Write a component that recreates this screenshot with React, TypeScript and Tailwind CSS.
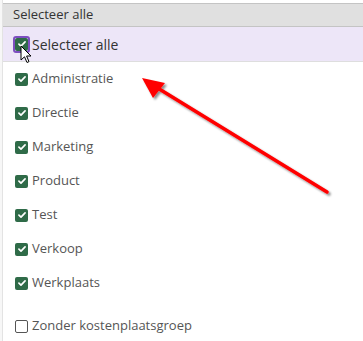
const items = ['Administratie', 'Directie', 'Marketing', 'Product', 'Test', 'Verkoop', 'Werkplaats'];

function CheckBox({ checked = true }: { checked?: boolean }) {
  if (!checked) {
    return <span className="block h-[13px] w-[13px] rounded-[2px] border border-[#555] bg-white" />;
  }
  return (
    <span className="flex h-[13px] w-[13px] items-center justify-center rounded-[2px] bg-[#2f6b48]">
      <svg viewBox="0 0 12 12" className="h-[10px] w-[10px]">
        <path d="M2.3 6.2 L4.8 8.6 L9.7 3.4" fill="none" stroke="white" strokeWidth="2" strokeLinecap="round" strokeLinejoin="round" />
      </svg>
    </span>
  );
}

export default function App() {
  return (
    <div className="relative h-[341px] w-[363px] overflow-hidden bg-white font-['Open_Sans',sans-serif] text-[13px] text-[#555]">
      <div className="flex h-full">
        {/* left gutter */}
        <div className="w-[3px] shrink-0 border-r border-[#e3e3e3] bg-[#f7f7f7]" />
        <div className="flex-1">
          <div className="mt-[3px] flex h-[24px] items-center border-y border-[#c4c4c4] bg-[#e0e0e0] pl-[10px] text-[#333]">
            Selecteer alle
          </div>
          <div className="relative flex h-[35px] items-center gap-[4px] border-b border-[#dedede] bg-[#ede6f8] pl-[12px] text-[#333]">
            <span className="rounded-[1px] outline-2 outline-[#7d4fc0]">
              <CheckBox />
            </span>
            <span className="text-[14px]">Selecteer alle</span>
            <svg viewBox="0 0 12 19" className="absolute left-[17px] top-[18px] h-[19px] w-[12px]">
              <path d="M1 1 L1 15 L4.5 11.8 L7 17.5 L9 16.6 L6.6 11 L11 11 Z" fill="white" stroke="black" strokeWidth="1" strokeLinejoin="round" />
            </svg>
          </div>
          <div className="flex flex-col">
            {items.map((label) => (
              <div key={label} className="flex h-[34px] items-center gap-[4px] pl-[12px]">
                <CheckBox />
                <span>{label}</span>
              </div>
            ))}
          </div>
          <div className="mt-[9px] flex h-[34px] items-center gap-[4px] pl-[12px]">
            <CheckBox checked={false} />
            <span>Zonder kostenplaatsgroep</span>
          </div>
        </div>
      </div>
      {/* red annotation arrow */}
      <svg className="pointer-events-none absolute left-0 top-0" width="363" height="341">
        <defs>
          <filter id="sh" x="-10%" y="-10%" width="130%" height="130%">
            <feDropShadow dx="2" dy="2" stdDeviation="1.2" floodColor="#000" floodOpacity="0.45" />
          </filter>
        </defs>
        <g filter="url(#sh)">
          <line x1="327" y1="192" x2="156" y2="87" stroke="#ff0000" strokeWidth="3.5" strokeLinecap="round" />
          <polygon points="142,78 165,83 153,98" fill="#ff0000" />
        </g>
      </svg>
    </div>
  );
}
